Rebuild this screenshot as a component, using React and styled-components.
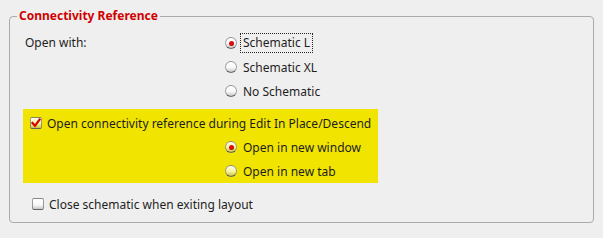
import React from 'react';
import styled, { createGlobalStyle } from 'styled-components';

const GlobalStyle = createGlobalStyle`
    html, body {
        margin: 0;
        padding: 0;
        background-color: #efefef;
    }
    body {
        font-family: "Noto Sans", "DejaVu Sans", sans-serif;
        font-size: 12px;
        color: #1e1e1e;
    }
`;

const Page = styled.div`
    width: 603px;
    height: 238px;
    padding: 16px 0 0 9px;
    box-sizing: border-box;
`;

const Frame = styled.section`
    position: relative;
    width: 585px;
    height: 207px;
    box-sizing: border-box;
    border: 1px solid #ababab;
    border-radius: 4px;
`;

const Legend = styled.h3`
    position: absolute;
    top: -10px;
    left: 7px;
    margin: 0;
    padding: 0 2px;
    background-color: #efefef;
    color: #d00000;
    font-size: 12px;
    font-weight: 700;
    line-height: 18px;
`;

const OpenWith = styled.div`
    display: grid;
    grid-template-columns: 200px 1fr;
    margin-top: 14px;
    padding-left: 15px;
`;

const Label = styled.div`
    height: 24px;
    line-height: 24px;
`;

const OptionList = styled.div`
    display: flex;
    flex-direction: column;
    padding-left: ${p => p.$indent || 0}px;
`;

const Row = styled.label`
    display: flex;
    align-items: center;
    gap: ${p => p.$gap || 6}px;
    height: 24px;
    padding-left: ${p => p.$indent || 0}px;
`;

const Radio = styled.span`
    position: relative;
    width: 12px;
    height: 12px;
    box-sizing: border-box;
    border-radius: 50%;
    border: 1px solid rgba(90, 90, 90, 0.55);
    border-bottom-color: rgba(60, 60, 60, 0.75);
    background: linear-gradient(rgba(255, 255, 255, 0.95), rgba(255, 255, 255, 0.6) 55%, rgba(150, 150, 150, 0.45));
    flex-shrink: 0;
    &::after {
        content: "";
        display: ${p => (p.$checked ? 'block' : 'none')};
        position: absolute;
        left: 2.5px;
        top: 2.5px;
        width: 5px;
        height: 5px;
        border-radius: 50%;
        background: radial-gradient(circle at 40% 40%, #f01010, #b00000);
    }
`;

const Box = styled.span`
    display: flex;
    align-items: center;
    justify-content: center;
    width: 12px;
    height: 12px;
    box-sizing: border-box;
    border: 1px solid rgba(90, 90, 90, 0.6);
    border-bottom-color: rgba(60, 60, 60, 0.8);
    border-radius: 2px;
    background: linear-gradient(rgba(255, 255, 255, 0.95), rgba(255, 255, 255, 0.55) 60%, rgba(150, 150, 150, 0.45));
    flex-shrink: 0;
`;

const Focus = styled.span`
    padding: 1px 2px;
    margin-left: -3px;
    line-height: 16px;
    border: 1px dotted #222;
`;

const Highlight = styled.div`
    width: 355px;
    height: 74px;
    margin: 6px 0 0 13px;
    padding: 2px 0 0 7px;
    box-sizing: border-box;
    background-color: #f0e400;
`;

const Footer = styled.div`
    margin-top: 9px;
    padding-left: 22px;
`;

const Check = () => (
    <svg width="10" height="10" viewBox="0 0 10 10">
        <path d="M1.5 5 L4 7.8 L8.6 1.6" fill="none" stroke="#d40000" strokeWidth="2.2" strokeLinecap="square" />
    </svg>
);

export default () => (
    <Page>
        <GlobalStyle />
        <Frame>
            <Legend>Connectivity Reference</Legend>
            <OpenWith>
                <Label>Open with:</Label>
                <OptionList>
                    <Row><Radio $checked /><Focus>Schematic L</Focus></Row>
                    <Row><Radio />Schematic XL</Row>
                    <Row><Radio />No Schematic</Row>
                </OptionList>
            </OpenWith>
            <Highlight>
                <Row $gap={5}><Box><Check /></Box>Open connectivity reference during Edit In Place/Descend</Row>
                <OptionList $indent={195}>
                    <Row><Radio $checked />Open in new window</Row>
                    <Row><Radio />Open in new tab</Row>
                </OptionList>
            </Highlight>
            <Footer>
                <Row $gap={5}><Box />Close schematic when exiting layout</Row>
            </Footer>
        </Frame>
    </Page>
);
